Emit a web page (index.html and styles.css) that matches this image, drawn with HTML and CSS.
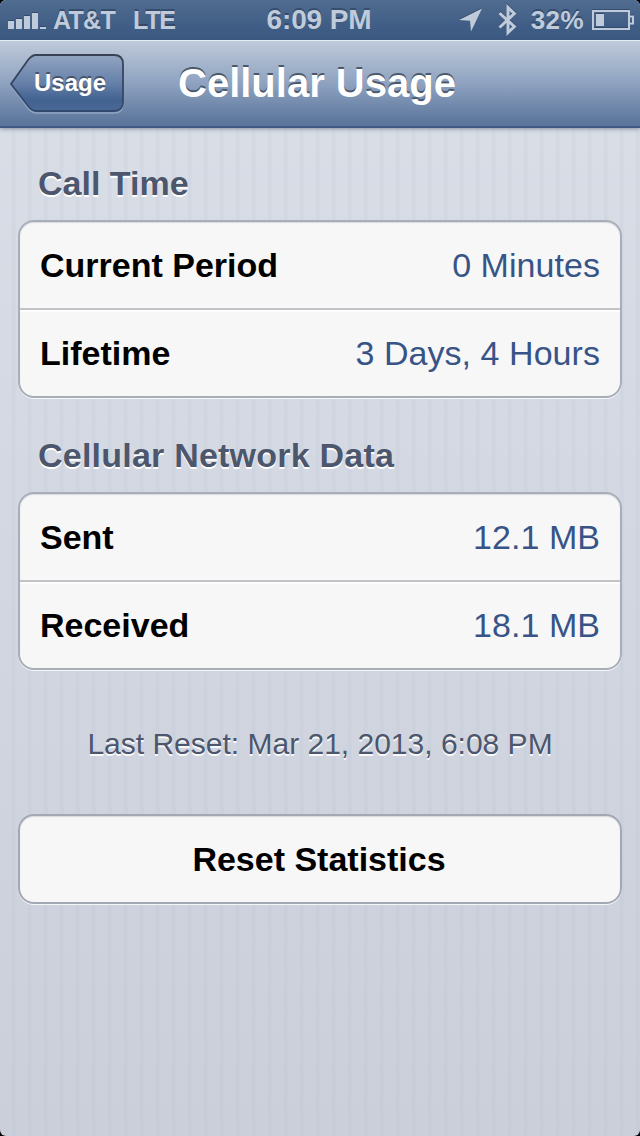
FILE: index.html
```
<!DOCTYPE html>
<html lang="en">
<head>
    <meta charset="UTF-8">
    <meta name="viewport" content="width=640">
    <title>Cellular Usage</title>
    <link rel="stylesheet" href="styles.css">
</head>
<body>
    <div class="screen">
        <div class="status-bar">
            <div class="status-left">
                <svg class="signal" width="40" height="18" viewBox="0 0 40 18">
                    <path d="M0 10h6v8H0zM8 8h6v10H8zM16 5h6v13h-6zM24 2h6v16h-6zM32 16h6v2h-6z"/>
                </svg>
                <span class="carrier">AT&amp;T</span>
                <span class="network">LTE</span>
            </div>
            <div class="clock">6:09 PM</div>
            <div class="status-right">
                <svg class="location" width="24" height="24" viewBox="0 0 24 24">
                    <path d="M23 0.5L12 23.5L11 12.8L0 12Z"/>
                </svg>
                <svg class="bluetooth" width="20" height="32" viewBox="0 0 20 32">
                    <path d="M1.5 9L16.3 22.5L10 28.5V3.5L16.3 9.5L1.5 23.5"/>
                </svg>
                <span class="percent">32%</span>
                <svg class="battery" width="42" height="20" viewBox="0 0 42 20">
                    <path class="outline" d="M1 1H37V19H1ZM37 6.5H41V13.5H37"/>
                    <path d="M4 4h8v12H4z"/>
                </svg>
            </div>
        </div>

        <div class="nav-bar">
            <div class="back">
                <svg width="116" height="60" viewBox="0 0 116 60">
                    <defs>
                        <linearGradient id="backFill" x1="0" y1="0" x2="0" y2="1">
                            <stop offset="0" stop-color="#92a5c2"/>
                            <stop offset="0.5" stop-color="#6680a9"/>
                            <stop offset="0.8" stop-color="#426290"/>
                            <stop offset="1" stop-color="#4a6896"/>
                        </linearGradient>
                        <linearGradient id="backLine" x1="0" y1="0" x2="0" y2="1">
                            <stop offset="0" stop-color="#384252"/>
                            <stop offset="1" stop-color="#32496f"/>
                        </linearGradient>
                    </defs>
                    <path class="back-glow" d="M26 3H104Q113 3 113 12V50Q113 59 104 59H26Q22 59 18 54L1 31L18 8Q22 3 26 3Z"/>
                    <path fill="url(#backFill)" stroke="url(#backLine)" stroke-width="1.8" d="M26 1H104Q113 1 113 10V48Q113 57 104 57H26Q22 57 18 52L1 30L18 6Q22 1 26 1Z"/>
                </svg>
                <span>Usage</span>
            </div>
            <h1>Cellular Usage</h1>
        </div>

        <div class="content">
            <h2>Call Time</h2>
            <div class="group">
                <div class="row">
                    <span class="label">Current Period</span>
                    <span class="value">0 Minutes</span>
                </div>
                <div class="row">
                    <span class="label">Lifetime</span>
                    <span class="value">3 Days, 4 Hours</span>
                </div>
            </div>

            <h2 class="data-title">Cellular Network Data</h2>
            <div class="group">
                <div class="row">
                    <span class="label">Sent</span>
                    <span class="value">12.1 MB</span>
                </div>
                <div class="row">
                    <span class="label">Received</span>
                    <span class="value">18.1 MB</span>
                </div>
            </div>

            <p class="last-reset">Last Reset: Mar 21, 2013, 6:08 PM</p>
            <button class="reset">Reset Statistics</button>
        </div>
    </div>
</body>
</html>
```
FILE: styles.css
```
* {
    box-sizing: border-box;
}

html, body {
    margin: 0;
    padding: 0;
    background: #000;
    font-family: "Liberation Sans", Arial, sans-serif;
}

.screen {
    width: 640px;
    height: 1136px;
    overflow: hidden;
    border-radius: 6px;
    /* linen style pinstripes over a soft vertical fade */
    background:
        repeating-linear-gradient(90deg, transparent 0 11px, rgba(150, 165, 200, 0.08) 13px 15px, transparent 16px),
        linear-gradient(180deg, #d8dde6 128px, #cacfda 100%);
}

/* Status bar */
.status-bar {
    display: grid;
    grid-template-columns: 1fr auto 1fr;
    align-items: center;
    height: 40px;
    padding: 0 6px 0 8px;
    background: linear-gradient(180deg, #506c8f, #3f5c85 70%, #3d5a84);
    color: #bfcbda;
    font-weight: bold;
    text-shadow: 0 -2px 0 rgba(40, 60, 90, 0.6);
}

.status-bar svg {
    display: block;
    fill: #bfcbda;
    filter: drop-shadow(0 -1px 0 rgba(40, 60, 90, 0.6));
}

.status-left,
.status-right {
    display: flex;
    align-items: center;
}

.status-right {
    justify-content: flex-end;
}

.signal {
    margin-right: 5px;
}

.carrier {
    width: 80px;
    font-size: 25px;
    letter-spacing: -0.7px;
}

.network {
    font-size: 25px;
    letter-spacing: -1.2px;
}

.clock {
    margin-right: 4px;
    font-size: 28px;
    letter-spacing: -0.1px;
}

.location {
    margin-right: 15px;
}

.status-bar .bluetooth {
    margin-right: 13px;
    fill: none;
    stroke: #bfcbda;
    stroke-width: 3;
}

.percent {
    font-size: 26px;
    letter-spacing: 0.4px;
    margin-right: 8px;
}

.battery .outline {
    fill: none;
    stroke: #bfcbda;
    stroke-width: 2;
}

/* Navigation bar */
.nav-bar {
    display: flex;
    align-items: flex-start;
    height: 88px;
    padding: 14px 10px 0;
    background: linear-gradient(180deg, #bfcada, #8ea2c0 50%, #5c769c 96%);
    border-top: 1px solid #e4eaf2;
    border-bottom: 2px solid #3f5a84;
    box-shadow: 0 1px 4px rgba(60, 70, 90, 0.5);
}

.back {
    position: relative;
    width: 116px;
    height: 60px;
    margin-top: -1px;
}

.back svg {
    display: block;
}

.back-glow {
    fill: none;
    stroke: rgba(180, 200, 225, 0.5);
    stroke-width: 1.5;
}

.back span {
    position: absolute;
    left: 24px;
    top: 0;
    color: #fff;
    font-size: 24px;
    font-weight: bold;
    line-height: 58px;
    text-shadow: 0 -2px 0 #46536a;
}

h1 {
    margin: 0 0 0 52px;
    color: #fff;
    font-size: 40px;
    line-height: 56px;
    text-shadow: 0 -2px 0 #4b586c;
}

/* Settings list */
.content {
    padding: 36px 18px 0;
}

h2 {
    margin: 0 0 17px 20px;
    color: #4c566c;
    font-size: 34px;
    line-height: 39px;
    text-shadow: 0 2px 0 #fff;
}

.data-title {
    letter-spacing: 0.22px;
}

.group {
    margin-bottom: 38px;
    border: 2px solid #a8aeb8;
    border-radius: 16px;
    background: #f7f7f7;
    box-shadow: 0 1px 0 rgba(255, 255, 255, 0.8), inset 0 1px 1px #d8dadd;
}

.row {
    display: flex;
    justify-content: space-between;
    align-items: center;
    height: 86px;
    padding: 0 20px;
    font-size: 34px;
}

.row + .row {
    height: 88px;
    border-top: 2px solid #c1c3c6;
    box-shadow: inset 0 2px 0 #fdfdfd;
}

.label {
    color: #000;
    font-weight: bold;
}

.value {
    color: #385487;
    letter-spacing: 0.05px;
}

.last-reset {
    margin: 56px 0 0;
    color: #4c566c;
    font-size: 30px;
    line-height: 36px;
    text-align: center;
    text-shadow: 0 2px 0 rgba(255, 255, 255, 0.9);
}

.reset {
    display: block;
    width: 100%;
    height: 90px;
    margin-top: 52px;
    padding: 0 2px 0 0;
    border: 2px solid #a3a9b4;
    border-radius: 16px;
    background: #f7f7f7;
    color: #000;
    font-family: inherit;
    font-size: 34px;
    font-weight: bold;
    box-shadow: 0 1px 0 rgba(255, 255, 255, 0.8), inset 0 1px 1px #d8dadd;
}
```
